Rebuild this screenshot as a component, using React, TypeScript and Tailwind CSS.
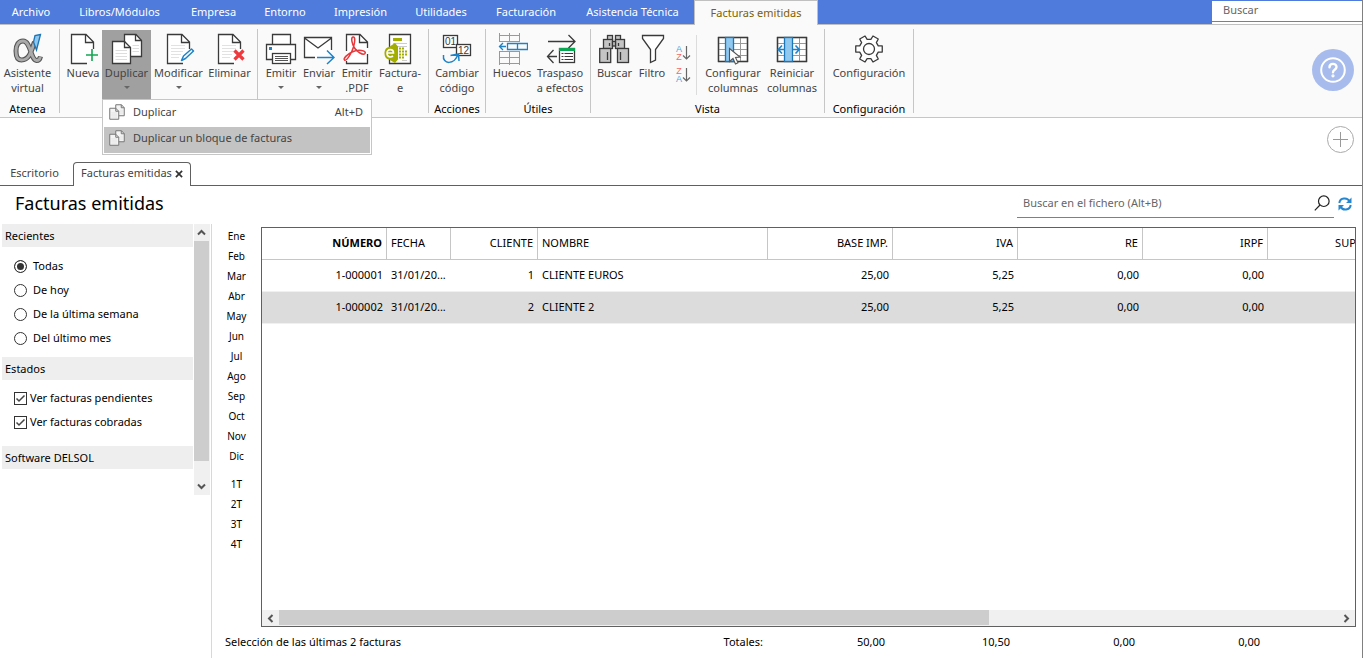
import React, { useState } from 'react';

type Kids = { children?: React.ReactNode };

function Icon({ children }: Kids) {
  return (
    <svg width="32" height="32" viewBox="0 0 32 32" fill="none" stroke="#3a3a3a" strokeWidth="1.3" className="shrink-0" aria-hidden="true">
      {children}
    </svg>
  );
}

const Alpha = () => (
  <Icon>
    <path d="M22.500 9C20 15 18.500 27 9.500 27C4.500 27 4 21 4 18C4 12 6.500 8 11 8C19 8 18.500 27 24.500 27.500C27 27.500 28 26 28.500 23.500" stroke="#555" strokeWidth="5" />
    <path d="M22.500 9C20 15 18.500 27 9.500 27C4.500 27 4 21 4 18C4 12 6.500 8 11 8C19 8 18.500 27 24.500 27.500C27 27.500 28 26 28.300 24" stroke="#aaa" strokeWidth="2.800" />
    <path d="M28.500 1.500L23 2.500L21.500 9L24.500 17Z" fill="#8fc7ee" stroke="#1c75b5" />
  </Icon>
);

const Page = ({ lines = true }: { lines?: boolean }) => (
  <>
    <path d="M4.500 1.500H19L26.500 9V22L20 30.500H4.500Z" fill="#fff" stroke="none" />
    {lines && <path d="M8 12.500H22M8 15.500H22M8 18.500H20M8 21.500H18M8 24.500H16" stroke="#e2e2e2" strokeWidth="1" />}
    <path d="M26.500 16V9L19 1.500H4.500V30.500H20M18.500 1.500V9.500H26.500" />
  </>
);

const Nueva = () => (
  <Icon>
    <Page lines={false} />
    <path d="M25 16V28M19 22H31" stroke="#14a651" strokeWidth="1.600" />
  </Icon>
);

const Copies = ({ light = false }: { light?: boolean }) => (
  <g stroke={light ? '#777' : '#3a3a3a'}>
    <path d="M13.500 1.500H25L30.500 7.500V23.500H13.500Z" fill={light ? '#f4f4f4' : '#fff'} />
    <path d="M24.500 1.500V7.500H30.500" />
    <path d="M1.500 8.500H13.500L19.500 14.500V30.500H1.500Z" fill={light ? '#f4f4f4' : '#fff'} />
    <path d="M13.500 8.500V14.500H19.500" />
    <path d="M4.500 17.500H16M4.500 20.500H16M4.500 23.500H16M4.500 26.500H16M21.500 12.500H28M21.500 15.500H28M21.500 18.500H28" stroke="#ddd" strokeWidth="1" />
  </g>
);

const Duplicar = () => (
  <Icon>
    <Copies />
  </Icon>
);

const Modificar = () => (
  <Icon>
    <Page />
    <path d="M18.500 27.500L20.500 23L28.500 16L30.500 18L22.500 25.500Z" fill="#fff" stroke="#1e82c8" strokeWidth="1.500" strokeLinejoin="round" />
  </Icon>
);

const Eliminar = () => (
  <Icon>
    <Page />
    <path d="M20.500 17.500L29.500 26.500M29.500 17.500L20.500 26.500" stroke="#ee3a3f" strokeWidth="3.200" />
  </Icon>
);

const Imprimir = () => (
  <Icon>
    <path d="M7.500 11.500V1.500H25.500V11.500" fill="#fff" />
    <path d="M7.500 26.500H1.500V11.500H30.500V26.500H25.500" fill="#fff" />
    <rect x="7.500" y="20.500" width="18" height="10" fill="#fff" />
    <path d="M10 23.500H23M10 25.500H23M10 27.500H23" stroke="#555" strokeWidth="1" />
    <rect x="4" y="14" width="3" height="3" fill="#1e82c8" stroke="none" />
  </Icon>
);

const Enviar = () => (
  <Icon>
    <path d="M1.500 4.500H28.500V18L22 24.500H1.500Z" fill="#fff" stroke="none" />
    <path d="M12 24.500H1.500V4.500H28.500V17M1.500 5L15 15L28.500 5" />
    <path d="M14 24.500H31M24 17.500L31 24.500L24 31" stroke="#1e82c8" strokeWidth="1.500" />
  </Icon>
);

const Pdf = () => (
  <Icon>
    <path d="M5.500 1.500H19L26.500 9V30.500H5.500Z" fill="#fff" stroke="none" />
    <path d="M5.500 18V1.500H19L26.500 9V15M26.500 21V30.500H5.500V28M18.500 1.500V9.500H26.500" />
    <path d="M12 4C9.500 4.500 11 11 13.500 15C16 19 22 22.500 24 20.500C26 17.500 17 16 11 19C6 21.500 2 25.500 3.500 27C6 28.500 11 19 12.500 14C14 9 14.500 3.500 12 4Z" stroke="#e5393c" strokeWidth="1.500" />
  </Icon>
);

const FacturaE = () => (
  <Icon>
    <path d="M5.500 1.500H26.500V30.500H5.500Z" fill="#fff" />
    <path d="M9 6.500H18" stroke="#a3ad00" strokeWidth="3" />
    <path d="M9 10.500H23M12 13.500H23M18 27.500H23" stroke="#ccc" strokeWidth="1" />
    <path d="M11 10L14 13.500V26.500L11 30L5 26.500C-1 26 -1 14.500 5 14Z" fill="#a3ad00" stroke="none" />
    <path d="M2.500 20H9.500C9.500 15.500 3 15.500 3 20C3 24.500 7 24.500 9 23" stroke="#fff" strokeWidth="1.600" />
    <path d="M15 15.500H21M15 18.500H24M15 21.500H24M15 24.500H21" stroke="#a3ad00" strokeWidth="2" strokeDasharray="2 1" />
  </Icon>
);

const Cambiar = () => (
  <Icon>
    <rect x="2.500" y="2.500" width="14" height="12" fill="#fff" />
    <rect x="15.500" y="11.500" width="14" height="11" fill="#fff" />
    <g fill="#3a3a3a" stroke="none" fontFamily="Liberation Sans, sans-serif" fontSize="10" textAnchor="middle">
      <text x="9.500" y="12">01</text>
      <text x="22.500" y="20.500">12</text>
    </g>
    <path d="M2.500 22C1 32 14 32 17 21M9.500 22.500L17.500 21L18 28" stroke="#1e82c8" strokeWidth="1.500" />
  </Icon>
);

const Huecos = () => (
  <Icon>
    <path d="M3.500 0V9M13.500 0V9M23.500 0V9M3.500 2.500H23.500M3.500 8.500H23.500M3.500 18V32M13.500 18V32M23.500 18V32M3.500 18.500H23.500M3.500 24.500H23.500M3.500 30.500H23.500" stroke="#999" strokeWidth="1" />
    <path d="M11.500 10.500H31.500V16.500H11.500ZM21.500 10.500V16.500M10 13.500H3.500M7 10L3.500 13.500L7 17" stroke="#1e82c8" />
  </Icon>
);

const Traspaso = () => (
  <Icon>
    <path d="M4 8.500H31M24.500 2L31 8.500L24.500 15M13 23.500H3.500M9.500 17L3.500 23.500L9.500 30" />
    <rect x="15.500" y="15.500" width="15" height="14" fill="#fff" />
    <path d="M15 16.500H31" stroke="#0aa651" strokeWidth="3" />
    <path d="M17.500 20.500H29M17.500 23.500H29M17.500 26.500H29" strokeDasharray="2 1 9" strokeWidth="1" />
  </Icon>
);

const Binoculars = () => (
  <Icon>
    <g fill="#c4c4c4">
      <rect x="8.500" y="2.500" width="5" height="5" />
      <rect x="16.500" y="2.500" width="5" height="5" />
      <rect x="4.500" y="6.500" width="9" height="9" />
      <rect x="16.500" y="6.500" width="9" height="9" />
      <rect x="13.500" y="8.500" width="3" height="4.500" />
      <rect x="0.700" y="15.500" width="11" height="14" />
      <rect x="18.500" y="15.500" width="11" height="14" />
    </g>
    <path d="M10.500 10V13M19.500 10V13M8.500 19V27M21.500 19V27" />
  </Icon>
);

const Filtro = () => (
  <Icon>
    <path d="M6.500 2.500H27.500V5.500L19.500 16.500V27L14.500 29.500V16.500L6.500 5.500Z" fill="#fff" />
  </Icon>
);

const Orden = ({ first, second, up }: { first: string; second: string; up: boolean }) => (
  <svg width="16" height="18" viewBox="0 0 16 18" fill="none" aria-hidden="true">
    <g fontFamily="Liberation Sans, sans-serif" fontSize="9" textAnchor="middle">
      <text x="4" y="8" fill={up ? '#4ba3dc' : '#f06a6a'}>{first}</text>
      <text x="4" y="16" fill={up ? '#f06a6a' : '#4ba3dc'}>{second}</text>
    </g>
    <path d="M11.500 2V15M8 11.500L11.500 15L15 11.500" stroke="#666" strokeWidth="1.200" />
  </svg>
);

const Grid = () => (
  <>
    <rect x="1.500" y="4.500" width="29" height="24" fill="#fff" />
    <path d="M2 10.500H30M2 16.500H30M2 22.500H30M23.500 5V28" stroke="#999" strokeWidth="1" />
    <rect x="1.500" y="4.500" width="29" height="24" />
    <rect x="8.500" y="4.500" width="8" height="24" fill="#90c8f0" stroke="#1c75b5" />
  </>
);

const Configurar = () => (
  <Icon>
    <Grid />
    <path d="M12.500 15.500V28.500L16 25.500L18.500 31L21 29.800L18.500 24.500L23 24Z" fill="#fff" stroke="#555" strokeWidth="1.100" />
  </Icon>
);

const Reiniciar = () => (
  <Icon>
    <Grid />
    <path d="M8.500 16.500H2.500M6 12.500L2.300 16.500L6 20.500M16.500 16.500H23M19.500 12.500L23.300 16.500L19.500 20.500" stroke="#1e82c8" strokeWidth="1.600" />
  </Icon>
);

const gearPoints = Array.from({ length: 6 })
  .flatMap((_, tooth) =>
    [
      [-19, 9.8],
      [-13, 13.6],
      [13, 13.6],
      [19, 9.8],
    ].map(([offset, radius]) => {
      const angle = ((tooth * 60 + offset) * Math.PI) / 180;
      return `${(16 + radius * Math.cos(angle)).toFixed(2)},${(16 + radius * Math.sin(angle)).toFixed(2)}`;
    }),
  )
  .join(' ');

const Gear = () => (
  <Icon>
    <polygon points={gearPoints} fill="#fff" strokeLinejoin="round" />
    <circle cx="16" cy="16" r="5.500" />
  </Icon>
);

const Caret = () => <span className="mt-[6px] h-0 w-0 border-x-[3px] border-t-[3px] border-x-transparent border-t-[#666]" />;

function Tool({ icon, lines, width, caret, active }: { icon: React.ReactNode; lines: string[]; width: string; caret?: boolean; active?: boolean }) {
  return (
    <button type="button" className={`flex h-[69px] shrink-0 flex-col items-center pt-[3px] leading-[15px] whitespace-nowrap ${width} ${active ? 'bg-[#a0a0a0]' : ''}`}>
      {icon}
      {lines.map((line) => (
        <span key={line}>{line}</span>
      ))}
      {caret && <Caret />}
    </button>
  );
}

function Group({ label, children }: { label?: string } & Kids) {
  return (
    <>
      <section className="flex shrink-0 flex-col justify-between px-1 pt-[5px] pb-px">
        <div className="flex">{children}</div>
        {label && <h2 className="text-center leading-[15px] text-black">{label}</h2>}
      </section>
      <div className="my-1 w-px shrink-0 bg-[#c6c6c6]" />
    </>
  );
}

const menuTabs = [
  ['Archivo', 'w-[62px]'],
  ['Libros/Módulos', 'w-[115px]'],
  ['Empresa', 'w-[73px]'],
  ['Entorno', 'w-[70px]'],
  ['Impresión', 'w-[81px]'],
  ['Utilidades', 'w-20'],
  ['Facturación', 'w-[90px]'],
  ['Asistencia Técnica', 'w-[123px]'],
];

const months = ['Ene', 'Feb', 'Mar', 'Abr', 'May', 'Jun', 'Jul', 'Ago', 'Sep', 'Oct', 'Nov', 'Dic'];
const quarters = ['1T', '2T', '3T', '4T'];
const ranges = ['Todas', 'De hoy', 'De la última semana', 'Del último mes'];

const columns = [
  { name: 'NÚMERO', width: 'w-[125px]', right: true, bold: true },
  { name: 'FECHA', width: 'w-16' },
  { name: 'CLIENTE', width: 'w-[87px]', right: true },
  { name: 'NOMBRE', width: 'w-[230px]' },
  { name: 'BASE IMP.', width: 'w-[125px]', right: true },
  { name: 'IVA', width: 'w-[125px]', right: true },
  { name: 'RE', width: 'w-[125px]', right: true },
  { name: 'IRPF', width: 'w-[125px]', right: true },
  { name: 'SUPLIDOS', width: 'w-[125px]', right: true },
];

const rows = [
  ['1-000001', '31/01/20...', '1', 'CLIENTE EUROS', '25,00', '5,25', '0,00', '0,00', ''],
  ['1-000002', '31/01/20...', '2', 'CLIENTE 2', '25,00', '5,25', '0,00', '0,00', ''],
];

function Chevron({ turn }: { turn: string }) {
  return (
    <svg width="9" height="9" viewBox="0 0 9 9" fill="none" stroke="#555" strokeWidth="2" className={turn} aria-hidden="true">
      <path d="M1 6.500L4.500 3L8 6.500" />
    </svg>
  );
}

function SideTitle({ children }: Kids) {
  return <h3 className="h-[23px] bg-[#eee] pl-[3px] leading-[23px]">{children}</h3>;
}

function Check({ label }: { label: string }) {
  return (
    <label className="flex h-6 items-center gap-[3px]">
      <span className="grid">
        <input type="checkbox" defaultChecked className="peer col-start-1 row-start-1 size-[13px] appearance-none border border-[#333] bg-white" />
        <svg viewBox="0 0 13 13" fill="none" stroke="#444" strokeWidth="1.500" className="pointer-events-none invisible col-start-1 row-start-1 size-[13px] peer-checked:visible" aria-hidden="true">
          <path d="M2.500 6.500L5 9L10.500 3.500" />
        </svg>
      </span>
      {label}
    </label>
  );
}

export default function App() {
  const [range, setRange] = useState('Todas');

  return (
    <div className="flex min-h-screen flex-col overflow-hidden border-r border-[#808080] bg-white font-['Noto_Sans','Open_Sans',sans-serif] text-[11px] text-black">
      <header>
        <nav className="flex h-[25px] border-b border-[#c0c0c0] bg-[#4e7bdc] text-white">
          {menuTabs.map(([name, width]) => (
            <button key={name} type="button" className={`shrink-0 whitespace-nowrap ${width}`}>
              {name}
            </button>
          ))}
          <button type="button" className="-mb-px w-[124px] shrink-0 border-x border-t border-[#c0c0c0] bg-[#fafafa] text-[#7f6000]">
            Facturas emitidas
          </button>
          <div className="mt-px ml-auto w-[150px] bg-white">
            <input aria-label="Buscar" placeholder="Buscar" className="block h-[21px] w-full border-b border-[#808080] pb-1 pl-[11px] outline-none placeholder:text-[#666]" />
          </div>
        </nav>

        <div className="flex h-[93px] border-b border-[#c6c6c6] bg-[#fafafa] text-[#444]">
          <div className="-ml-1 flex">
            <Group label="Atenea">
              <Tool icon={<Alpha />} lines={['Asistente', 'virtual']} width="w-[55px]" />
            </Group>
          </div>
          <Group>
            <Tool icon={<Nueva />} lines={['Nueva']} width="w-[38px]" />
            <div className="relative">
              <Tool icon={<Duplicar />} lines={['Duplicar']} width="w-[49px]" caret active />
              <div role="menu" className="absolute top-full left-0 z-10 w-[270px] border border-[#c6c6c6] bg-white p-px">
                <button type="button" role="menuitem" className="flex h-[26px] w-full items-center pb-[4px] pl-[5px]">
                  <svg width="16" height="16" viewBox="0 0 32 32" fill="none" strokeWidth="2" aria-hidden="true">
                    <Copies light />
                  </svg>
                  <span className="ml-2">Duplicar</span>
                  <span className="mr-[7px] ml-auto">Alt+D</span>
                </button>
                <button type="button" role="menuitem" className="flex h-[26px] w-full items-center bg-[#c3c3c3] pb-1 pl-[5px]">
                  <svg width="16" height="16" viewBox="0 0 32 32" fill="none" strokeWidth="2" aria-hidden="true">
                    <Copies light />
                  </svg>
                  <span className="ml-2">Duplicar un bloque de facturas</span>
                </button>
              </div>
            </div>
            <Tool icon={<Modificar />} lines={['Modificar']} width="w-[55px]" caret />
            <Tool icon={<Eliminar />} lines={['Eliminar']} width="w-[47px]" />
          </Group>
          <Group>
            <Tool icon={<Imprimir />} lines={['Emitir']} width="w-[38px]" caret />
            <Tool icon={<Enviar />} lines={['Enviar']} width="w-[38px]" caret />
            <Tool icon={<Pdf />} lines={['Emitir', '.PDF']} width="w-[38px]" />
            <Tool icon={<FacturaE />} lines={['Factura-', 'e']} width="w-12" />
          </Group>
          <Group label="Acciones">
            <Tool icon={<Cambiar />} lines={['Cambiar', 'código']} width="w-12" />
          </Group>
          <Group label="Útiles">
            <Tool icon={<Huecos />} lines={['Huecos']} width="w-[44px]" />
            <Tool icon={<Traspaso />} lines={['Traspaso', 'a efectos']} width="w-[52px]" />
          </Group>
          <Group label="Vista">
            <Tool icon={<Binoculars />} lines={['Buscar']} width="w-[39px]" />
            <Tool icon={<Filtro />} lines={['Filtro']} width="w-9" />
            <div className="flex w-[26px] flex-col items-center gap-1 pt-[14px]">
              <button type="button" aria-label="Orden ascendente">
                <Orden first="A" second="Z" up />
              </button>
              <button type="button" aria-label="Orden descendente">
                <Orden first="Z" second="A" up={false} />
              </button>
            </div>
            <div className="mt-[5px] mr-[5px] h-[60px] w-px bg-[#dcdcdc]" />
            <Tool icon={<Configurar />} lines={['Configurar', 'columnas']} width="w-[62px]" />
            <Tool icon={<Reiniciar />} lines={['Reiniciar', 'columnas']} width="w-14" />
          </Group>
          <Group label="Configuración">
            <Tool icon={<Gear />} lines={['Configuración']} width="w-20" />
          </Group>
          <div className="ml-auto flex items-center pr-2 pb-[2px]">
            <button type="button" aria-label="Ayuda" className="flex size-[42px] items-center justify-center rounded-full bg-[#a7bcec]">
              <svg width="26" height="26" viewBox="0 0 26 26" fill="none" stroke="#fff" strokeWidth="2" strokeLinecap="round" aria-hidden="true">
                <circle cx="13" cy="13" r="11.800" />
                <path d="M9.500 10.200C9.500 5.800 16.500 5.800 16.500 10C16.500 12.700 13 12.700 13 15.200" strokeWidth="2.400" />
                <circle cx="13" cy="18.800" r="0.600" />
              </svg>
            </button>
          </div>
        </div>
      </header>

      <div className="flex h-11 items-center justify-end pr-2 pb-[2px]">
        <button type="button" aria-label="Añadir" className="flex size-[27px] items-center justify-center rounded-full border border-[#aaa]">
          <svg width="15" height="15" viewBox="0 0 15 15" stroke="#999" aria-hidden="true">
            <path d="M7.500 0V15M0 7.500H15" />
          </svg>
        </button>
      </div>

      <div className="flex h-6 border-b border-[#606060] text-[#444]">
        <button type="button" className="w-[73px] pr-1">
          Escritorio
        </button>
        <div className="-mb-px flex w-[118px] items-center gap-[3px] rounded-t-[4px] border border-b-0 border-[#606060] bg-white pb-[2px] pl-[7px] whitespace-nowrap">
          <button type="button">Facturas emitidas</button>
          <button type="button" aria-label="Cerrar">
            <svg width="8" height="8" viewBox="0 0 9 9" stroke="#333" strokeWidth="1.900" aria-hidden="true">
              <path d="M1 1L8 8M8 1L1 8" />
            </svg>
          </button>
        </div>
      </div>

      <div className="flex h-[38px] items-start justify-between pr-[10px] pl-[15px]">
        <h1 className="text-lg leading-[34px]">Facturas emitidas</h1>
        <div className="flex items-center gap-1">
          <div className="flex h-8 w-[317px] items-center border-b border-[#808080] pt-[3px] pr-[4px]">
            <input aria-label="Buscar en el fichero" placeholder="Buscar en el fichero (Alt+B)" className="min-w-0 flex-1 pl-[6px] outline-none placeholder:text-[#666]" />
            <svg width="16" height="16" viewBox="0 0 16 16" fill="none" stroke="#222" strokeWidth="1.200" aria-hidden="true">
              <circle cx="9.800" cy="6.200" r="5.300" />
              <path d="M6 10L0.800 15.300" />
            </svg>
          </div>
          <button type="button" aria-label="Actualizar" className="pt-1">
            <svg width="14" height="14" viewBox="0 0 14 14" fill="none" stroke="#2487cf" strokeWidth="2" aria-hidden="true">
              <path d="M1.300 6C2 0.500 9.500 0 11.500 4.500M12.700 8C12 13.500 4.500 14 2.500 9.500" />
              <path d="M13.500 0.500V6H8ZM0.500 13.500V8H6Z" fill="#2487cf" stroke="none" />
            </svg>
          </button>
        </div>
      </div>

      <main className="flex flex-1">
        <aside className="flex w-[212px] shrink-0 items-start border-r border-[#d8d8d8] pl-[2px]">
          <div className="w-[191px]">
            <SideTitle>Recientes</SideTitle>
            <div role="radiogroup" aria-label="Recientes" className="my-[7px] pl-3">
              {ranges.map((name) => (
                <label key={name} className="flex h-6 items-center gap-[6px]">
                  <input
                    type="radio"
                    name="range"
                    checked={range === name}
                    onChange={() => setRange(name)}
                    className="size-[13px] appearance-none rounded-full border border-[#333] bg-white checked:bg-[#333] checked:shadow-[inset_0_0_0_2px_white]"
                  />
                  {name}
                </label>
              ))}
            </div>
            <SideTitle>Estados</SideTitle>
            <div className="mt-[6px] mb-3 pl-3">
              <Check label="Ver facturas pendientes" />
              <Check label="Ver facturas cobradas" />
            </div>
            <SideTitle>Software DELSOL</SideTitle>
          </div>
          <div className="ml-px flex h-[271px] w-4 flex-col bg-[#f0f0f0]">
            <button type="button" aria-label="Subir" className="flex h-[17px] items-center justify-center pr-px">
              <Chevron turn="rotate-0" />
            </button>
            <div className="mr-px h-[220px] bg-[#cdcdcd]" />
            <button type="button" aria-label="Bajar" className="flex flex-1 items-center justify-center pt-4 pr-px">
              <Chevron turn="rotate-180" />
            </button>
          </div>
        </aside>

        <div className="flex min-w-0 flex-1 flex-col pt-[3px] pr-[6px]">
          <div className="flex flex-1">
            <div className="-mt-px flex w-[49px] shrink-0 flex-col text-[10px]">
              {months.map((month) => (
                <button key={month} type="button" className="h-5">
                  {month}
                </button>
              ))}
              <div className="h-2" />
              {quarters.map((quarter) => (
                <button key={quarter} type="button" className="h-5">
                  {quarter}
                </button>
              ))}
            </div>

            <div className="flex min-w-0 flex-1 flex-col justify-between border border-[#606060]">
              <div className="overflow-hidden">
                <table className="w-[1131px] table-fixed border-separate border-spacing-0">
                  <thead>
                    <tr className="h-8">
                      {columns.map((c) => (
                        <th key={c.name} scope="col" className={`border-r border-b border-[#c6c6c6] px-1 ${c.width} ${c.right ? 'text-right' : 'text-left'} ${c.bold ? 'font-bold' : 'font-normal'}`}>
                          {c.name}
                        </th>
                      ))}
                    </tr>
                  </thead>
                  <tbody>
                    {rows.map((row, i) => (
                      <tr key={row[0]} className={i === 1 ? 'h-8 bg-[#dcdcdc]' : 'h-8'}>
                        {row.map((cell, j) => (
                          <td key={columns[j].name} className={`border-b border-[#f0f0f0] whitespace-nowrap ${columns[j].right ? 'pr-1 text-right' : 'pl-1'}`}>
                            {cell}
                          </td>
                        ))}
                      </tr>
                    ))}
                  </tbody>
                </table>
              </div>
              <div className="flex h-4 bg-[#f0f0f0]">
                <button type="button" aria-label="Desplazar a la izquierda" className="flex w-[17px] items-center justify-center">
                  <Chevron turn="-rotate-90" />
                </button>
                <div className="flex-1 pb-px">
                  <div className="h-full w-[67%] bg-[#cdcdcd]" />
                </div>
                <button type="button" aria-label="Desplazar a la derecha" className="flex w-[17px] items-center justify-center">
                  <Chevron turn="rotate-90" />
                </button>
              </div>
            </div>
          </div>

          <footer className="flex h-[31px] items-center">
            <div className="flex w-[555px] shrink-0 justify-between pr-1 pl-[13px]">
              <span>Selección de las últimas 2 facturas</span>
              <span>Totales:</span>
            </div>
            {['50,00', '10,50', '0,00', '0,00'].map((total, i) => (
              <span key={i} className="w-[125px] shrink-0 pr-[7px] text-right">
                {total}
              </span>
            ))}
          </footer>
        </div>
      </main>
    </div>
  );
}
